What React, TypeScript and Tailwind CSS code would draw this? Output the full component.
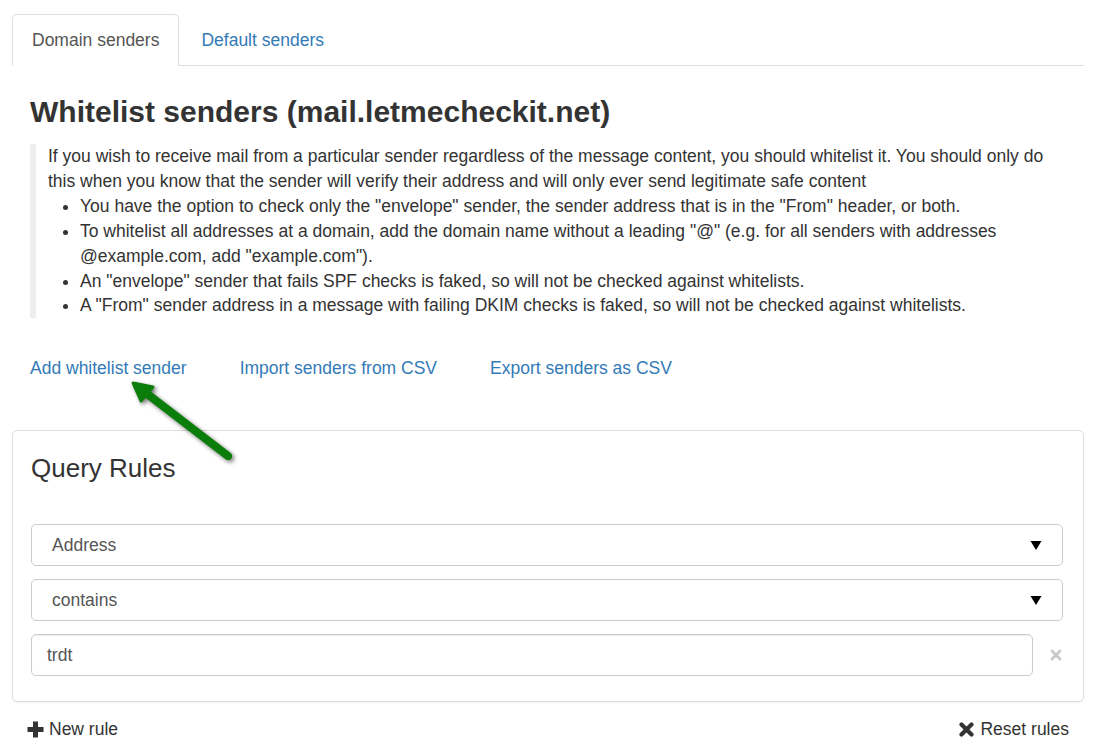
import React from "react";

const font = { fontFamily: '"Liberation Sans", Arial, Helvetica, sans-serif' };

function Caret() {
  return (
    <svg width="12" height="12" viewBox="0 0 12 12" className="text-black">
      <path d="M0.5 2 L11.5 2 L6 11 Z" fill="currentColor" />
    </svg>
  );
}

function SelectBox({ label }: { label: string }) {
  return (
    <div className="flex h-[42px] items-center justify-between rounded-[5px] border border-[#ccc] bg-white pl-[20px] pr-[20px] text-[17.5px] text-[#555]">
      <span>{label}</span>
      <Caret />
    </div>
  );
}

export default function App() {
  return (
    <div className="relative min-h-[749px] w-full bg-white text-[#333]" style={font}>
      {/* tabs */}
      <div className="pl-[12px] pr-[14px] pt-[14px]">
        <div className="flex border-b border-[#ddd] text-[17.5px] leading-[25px]">
          <div className="-mb-px rounded-t-[5px] border border-[#ddd] border-b-white bg-white px-[19px] pb-[12px] pt-[13px] text-[#555]">
            Domain senders
          </div>
          <div className="ml-[3px] px-[19px] pb-[12px] pt-[14px] text-[#337ab7]">Default senders</div>
        </div>

        <div className="pl-[18px]">
          <h2 className="mt-[29px] text-[30px] font-bold leading-[33px]">
            Whitelist senders (mail.letmecheckit.net)
          </h2>

          <div className="mt-[16px] border-l-[6px] border-[#eee] pl-[12px] pr-[25px] text-[17.5px] leading-[24.9px]">
            <p>
              If you wish to receive mail from a particular sender regardless of the message content, you
              should whitelist it. You should only do this when you know that the sender will verify their
              address and will only ever send legitimate safe content
            </p>
            <ul className="list-disc pl-[32px]">
              <li>
                You have the option to check only the "envelope" sender, the sender address that is in the
                "From" header, or both.
              </li>
              <li>
                To whitelist all addresses at a domain, add the domain name without a leading "@" (e.g. for
                all senders with addresses @example.com, add "example.com").
              </li>
              <li>An "envelope" sender that fails SPF checks is faked, so will not be checked against whitelists.</li>
              <li>
                A "From" sender address in a message with failing DKIM checks is faked, so will not be checked
                against whitelists.
              </li>
            </ul>
          </div>

          <div className="mt-[38px] flex gap-[53px] text-[17.5px] leading-[25px] text-[#337ab7]">
            <span>Add whitelist sender</span>
            <span>Import senders from CSV</span>
            <span>Export senders as CSV</span>
          </div>
        </div>

        {/* query rules panel */}
        <div className="mt-[49px] rounded-[5px] border border-[#ddd] bg-white pb-[25px] pl-[18px] pr-[20px] pt-[23px] shadow-[0_1px_1px_rgba(0,0,0,0.05)]">
          <h3 className="text-[26px] leading-[29px] text-[#333]">Query Rules</h3>
          <div className="mt-[41px] flex flex-col gap-[13px]">
            <SelectBox label="Address" />
            <SelectBox label="contains" />
            <div className="flex items-center">
              <div className="flex h-[42px] flex-1 items-center rounded-[5px] border border-[#ccc] pl-[15px] text-[17.5px] text-[#555] shadow-[inset_0_1px_1px_rgba(0,0,0,0.075)]">
                trdt
              </div>
              <div className="flex w-[30px] justify-end pr-[1px]">
                <svg width="12" height="12" viewBox="0 0 12 12">
                  <path d="M2 2 L10 10 M10 2 L2 10" stroke="#c8c8c8" strokeWidth="2.8" strokeLinecap="round" />
                </svg>
              </div>
            </div>
          </div>
        </div>

        <div className="mt-[15px] flex items-center justify-between px-[15px] text-[17.5px] leading-[25px]">
          <div className="flex items-center gap-[5px]">
            <svg width="17" height="17" viewBox="0 0 17 17">
              <path d="M6 0.5 H11 V6 H16.5 V11 H11 V16.5 H6 V11 H0.5 V6 H6 Z" fill="#333" />
            </svg>
            <span>New rule</span>
          </div>
          <div className="flex items-center gap-[6px]">
            <svg width="15" height="15" viewBox="0 0 15 15">
              <path d="M2.5 2.5 L12.5 12.5 M12.5 2.5 L2.5 12.5" stroke="#333" strokeWidth="4.2" strokeLinecap="round" />
            </svg>
            <span>Reset rules</span>
          </div>
        </div>
      </div>

      {/* annotation arrow */}
      <svg
        className="pointer-events-none absolute left-0 top-0"
        width="1098"
        height="749"
        style={{ filter: "drop-shadow(2px 2px 2px rgba(0,0,0,0.55))" }}
      >
        <line x1="228" y1="456" x2="146" y2="393" stroke="#0a7d0a" strokeWidth="8" strokeLinecap="round" />
        <polygon points="133,383 153,387 141,401" fill="#0a7d0a" stroke="#0a7d0a" strokeWidth="3" strokeLinejoin="round" />
      </svg>
    </div>
  );
}
